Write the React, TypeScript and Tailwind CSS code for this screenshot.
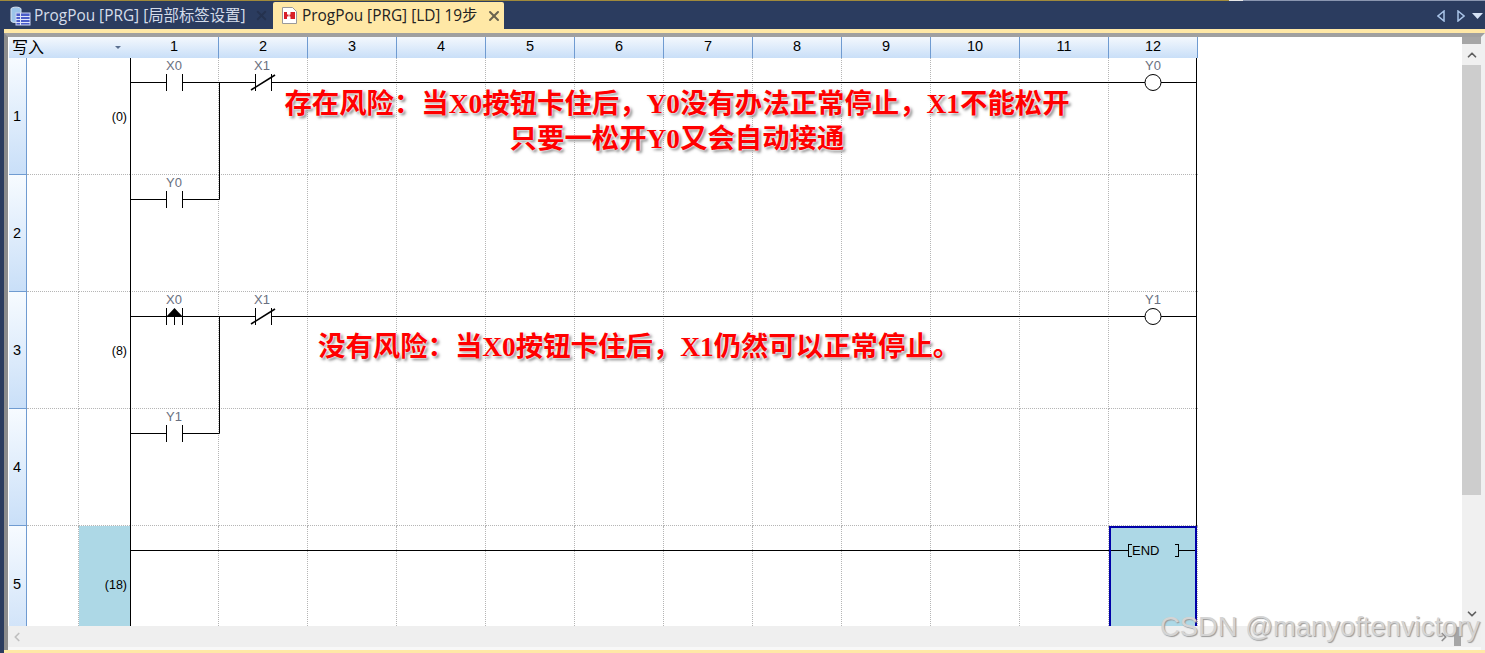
import { ChevronDown, ChevronLeft, ChevronRight, ChevronUp, X } from "lucide-react";

const columns = [1, 2, 3, 4, 5, 6, 7, 8, 9, 10, 11, 12];
const rows = [1, 2, 3, 4, 5];
const stepNumbers: Record<number, string> = { 1: "(0)", 3: "(8)", 5: "(18)" };

// full width colon and comma written as escapes
const noteOne = "存在风险\uFF1A当X0按钮卡住后\uFF0CY0没有办法正常停止\uFF0CX1不能松开";
const noteTwo = "只要一松开Y0又会自动接通";
const noteThree = "没有风险\uFF1A当X0按钮卡住后\uFF0CX1仍然可以正常停止。";

// ladder diagram coordinates are relative to the top left of the cell area (x 130, y 58)
const Label = ({ x, y, text }: { x: number; y: number; text: string }) => (
  <text x={x} y={y - 12} textAnchor="middle" fontSize="13" fill="#6a7080">{text}</text>
);

const Contact = ({ x, y, label }: { x: number; y: number; label: string }) => (
  <g>
    <path d={`M${x} ${y + 0.5}H${x + 36} M${x + 36.5} ${y - 8}V${y + 9} M${x + 52.5} ${y - 8}V${y + 9} M${x + 52} ${y + 0.5}H${x + 89}`} stroke="#000" fill="none" />
    <Label x={x + 44} y={y} text={label} />
  </g>
);

const NormallyClosed = ({ x, y, label }: { x: number; y: number; label: string }) => (
  <g>
    <path d={`M${x} ${y + 0.5}H${x + 36} M${x + 36.5} ${y - 8}V${y + 9} M${x + 52.5} ${y - 8}V${y + 9} M${x + 52} ${y + 0.5}H${x + 89}`} stroke="#000" fill="none" />
    <path d={`M${x + 32} ${y + 8}L${x + 56} ${y - 7}`} stroke="#000" strokeWidth="1.6" />
    <Label x={x + 43} y={y} text={label} />
  </g>
);

const RisingContact = ({ x, y, label }: { x: number; y: number; label: string }) => (
  <g>
    <path d={`M${x} ${y + 0.5}H${x + 36} M${x + 36.5} ${y - 8}V${y + 9} M${x + 52.5} ${y - 8}V${y + 9} M${x + 44.5} ${y}V${y + 9} M${x + 52} ${y + 0.5}H${x + 89}`} stroke="#000" fill="none" />
    <path d={`M${x + 36} ${y + 1}L${x + 44.5} ${y - 8}L${x + 53} ${y + 1}Z`} fill="#000" />
    <Label x={x + 44} y={y} text={label} />
  </g>
);

const Coil = ({ y, label }: { y: number; label: string }) => (
  <g>
    <circle cx="1023" cy={y + 0.5} r="8" fill="#fff" stroke="#000" />
    <Label x={1023} y={y} text={label} />
  </g>
);

const Ladder = () => (
  <svg className="absolute left-0 top-0" width="1068" height="568" fontFamily="'Liberation Sans', sans-serif">
    <path d="M0.5 0V568 M1066.5 0V468" stroke="#000" fill="none" />
    <path d="M178 24.5H1015 M1031 24.5H1067 M89.5 24V141.5H52 M178 258.5H1015 M1031 258.5H1067 M89.5 258V375.5H52" stroke="#000" fill="none" />
    <Contact x={0} y={24} label="X0" />
    <NormallyClosed x={89} y={24} label="X1" />
    <Coil y={24} label="Y0" />
    <Contact x={0} y={141} label="Y0" />
    <RisingContact x={0} y={258} label="X0" />
    <NormallyClosed x={89} y={258} label="X1" />
    <Coil y={258} label="Y1" />
    <Contact x={0} y={375} label="Y1" />
    <path d="M0 492.5H979" stroke="#000" />
  </svg>
);

const App = () => {
  return (
    <div className="w-[1485px] h-[653px] overflow-hidden relative bg-[#2b3c5f] flex flex-col font-['Liberation_Sans',sans-serif]">
      {/* Tab strip */}
      <div className="h-px shrink-0 flex">
        <div className="w-[1229px] bg-[#a08a3c]" />
        <div className="w-[14px] bg-[#e8e8e8]" />
        <div className="flex-1 bg-[#8a96b0]" />
      </div>
      <div className="h-[28px] shrink-0 flex items-end pl-[4px]">
        <div className="h-[27px] w-[269px] flex items-center pl-[6px] gap-[3px] text-[15.4px] text-[#d5dcea] font-['Open_Sans','Noto_Sans_CJK_SC',sans-serif]">
          <svg width="21" height="20" viewBox="0 0 21 20" className="shrink-0">
            <path d="M1 3C1 0.5 11 0.5 11 3V15C11 17 1 17 1 15Z" fill="#9cc4e8" stroke="#dbe6f2" />
            <rect x="6" y="7" width="14" height="12" fill="#4a5cc8" stroke="#c9d2f2" />
            <path d="M6 10.5H20 M6 13.5H20 M6 16.5H20 M10.5 7V19" stroke="#dfe4fa" />
          </svg>
          <span className="whitespace-nowrap">ProgPou [PRG] [局部标签设置]</span>
          <X size={15} strokeWidth={3} className="ml-auto mr-[4px] text-[#25324f]" />
        </div>
        <div className="h-[27px] w-[231px] bg-[#ffe8a6] rounded-t-[2px] flex items-center pl-[8px] gap-[4px] text-[15.4px] text-[#222] font-['Open_Sans','Noto_Sans_CJK_SC',sans-serif]">
          <svg width="17" height="19" viewBox="0 0 17 19" className="shrink-0">
            <path d="M1.5 1.5H11.5L15.5 5.5V17.5H1.5Z" fill="#fff" stroke="#9a9a9a" />
            <path d="M3 6H6V8.5H7.5V10.5H6V13H3Z M14 6H9.5V8.5H8.5V10.5H9.5V13H14Z" fill="#d81f26" />
          </svg>
          <span className="whitespace-nowrap">ProgPou [PRG] [LD] 19步</span>
          <X size={16} strokeWidth={3} className="ml-auto mr-[2px] text-[#6a6450]" />
        </div>
        <div className="ml-auto h-[27px] flex items-center pr-[2px] text-[#a9c4e8]">
          <svg width="8" height="12" viewBox="0 0 8 12" className="mr-[12px]"><path d="M7 1L1 6L7 11Z" fill="none" stroke="currentColor" strokeWidth="1.5" /></svg>
          <svg width="8" height="12" viewBox="0 0 8 12" className="mr-[7px]"><path d="M1 1L7 6L1 11Z" fill="none" stroke="currentColor" strokeWidth="1.5" /></svg>
          <svg width="11" height="6" viewBox="0 0 11 6"><path d="M0 0H11L5.5 6Z" fill="#d5e2f5" /></svg>
        </div>
      </div>
      <div className="h-[4px] shrink-0 bg-[#ffe8a6] ml-[4px]" />

      {/* Editor */}
      <div className="flex-1 min-h-0 ml-[4px] bg-white border-l-[4px] border-l-[#8c8c8c] border-t-[4px] border-t-[#a0a0a0] border-r-[4px] border-r-[#f0f0f0] flex flex-col">
        <div className="flex-1 min-h-0 flex">
          {/* Grid, the last row is only partly scrolled into view */}
          <div className="w-[1190px] shrink-0 relative pl-px">
            <div className="grid grid-cols-[18px_52px_51px_repeat(12,89px)] grid-rows-[21px_repeat(4,117px)_100px] text-black">
              <div className="col-span-2 flex items-center pb-[3px] bg-gradient-to-b from-[#f4f8fd] to-[#c9dff8] text-[16px] leading-[18px] pl-[3px] font-['Noto_Sans_CJK_SC',sans-serif]">写入</div>
              <div className="flex items-center justify-end pr-[9px] bg-gradient-to-b from-[#f4f8fd] to-[#c9dff8]">
                <span className="border-x-[3px] border-x-transparent border-t-[3px] border-t-[#5a6f90]" />
              </div>
              {columns.map((col) => (
                <div key={col} className="flex items-center justify-center pb-px text-[14.5px] bg-gradient-to-b from-[#f4f8fd] to-[#c9dff8] border-r border-r-[#6f9bd1]">
                  {col}
                </div>
              ))}
              {rows.map((row) => (
                <div key={row} className="contents">
                  <div className={`flex items-center pl-[4px] text-[14.5px] bg-gradient-to-b from-[#f7fbff] border-r border-r-[#6f9bd1] ${row === 5 ? "to-[#d2e4f9] pt-[18px]" : "to-[#c9dff8] pt-[2px] border-b border-b-[#6f9bd1]"}`}>
                    {row}
                  </div>
                  <div className={row === 5 ? "border-r border-dotted border-[#b5b5b5]" : "border-r border-b border-dotted border-[#b5b5b5]"} />
                  <div className={`flex items-center justify-end pr-[3px] text-[12.5px] ${row === 5 ? "bg-[#add8e6] pt-[18px]" : "pt-[2px] border-b border-dotted border-b-[#b5b5b5]"}`}>
                    {stepNumbers[row]}
                  </div>
                  {columns.map((col) => (
                    <div
                      key={col}
                      className={
                        row === 5
                          ? "border-r border-dotted border-[#b5b5b5]"
                          : col === 12
                            ? "border-b border-dotted border-b-[#b5b5b5]"
                            : "border-r border-b border-dotted border-[#b5b5b5]"
                      }
                    />
                  ))}
                </div>
              ))}
            </div>
            <div className="absolute left-[122px] top-[21px]">
              <Ladder />
            </div>
            {/* selected END cell */}
            <div className="absolute left-[1101px] top-[489px] w-[88px] h-[100px] bg-[#add8e6] border-[2px] border-[#0000a8] border-b-0">
              <div className="flex items-center mt-[14px] text-[13px] h-[17px]">
                <span className="w-[17px] h-px bg-black" />
                <span className="w-[4px] h-[13px] border-l border-y border-black" />
                <span className="w-[43px]">END</span>
                <span className="w-[4px] h-[13px] border-r border-y border-black" />
                <span className="flex-1 h-px bg-black" />
              </div>
            </div>
          </div>
          <div className="flex-1" />
          {/* Vertical scrollbar */}
          <div className="w-[19px] shrink-0 bg-[#f0f0f0] flex flex-col">
            <div className="h-[7px] bg-[#a6a6a6]" />
            <div className="h-[21px] flex items-center justify-center"><ChevronUp size={14} strokeWidth={3} className="text-[#606060]" /></div>
            <div className="h-[430px] bg-[#cdcdcd]" />
            <div className="flex-1 flex items-end justify-center pb-[5px]"><ChevronDown size={14} strokeWidth={3} className="text-[#606060]" /></div>
          </div>
        </div>
        {/* Horizontal scrollbar */}
        <div className="h-[21px] shrink-0 bg-[#efefef] flex items-center justify-between pl-[2px] pr-[20px]">
          <ChevronLeft size={14} strokeWidth={3} className="text-[#c0c0c0]" />
          <div className="flex items-center gap-[3px]">
            <ChevronRight size={14} strokeWidth={3} className="text-[#909090]" />
            <div className="w-[7px] h-[19px] bg-[#a6a6a6]" />
          </div>
        </div>
        <div className="h-[3px] shrink-0 bg-[#f8f8f8]" />
      </div>
      <div className="h-[3px] shrink-0 bg-[#ffe8a6] ml-[4px]" />

      {/* Annotations on top of the picture */}
      <div className="absolute left-[177px] top-[87px] w-[1000px] text-center text-[27.4px] leading-[35px] font-bold text-[#ff0000] font-['Liberation_Serif','Noto_Sans_CJK_SC',serif] [text-shadow:0_0_2px_#fff,0_0_3px_#fff,2px_2px_3px_#777]">
        <p className="whitespace-nowrap">{noteOne}</p>
        <p>{noteTwo}</p>
      </div>
      <p className="absolute left-[318px] top-[330px] text-[27.4px] leading-[35px] font-bold text-[#ff0000] whitespace-nowrap font-['Liberation_Serif','Noto_Sans_CJK_SC',serif] [text-shadow:0_0_2px_#fff,0_0_3px_#fff,2px_2px_3px_#777]">
        {noteThree}
      </p>
      <p className="absolute left-[1160px] top-[611px] text-[27.4px] leading-[32px] whitespace-nowrap text-[#d4d4d4] [text-shadow:1px_1px_1px_#9a9a9a]">
        CSDN @manyoftenvictory
      </p>
    </div>
  );
};

export default App;
